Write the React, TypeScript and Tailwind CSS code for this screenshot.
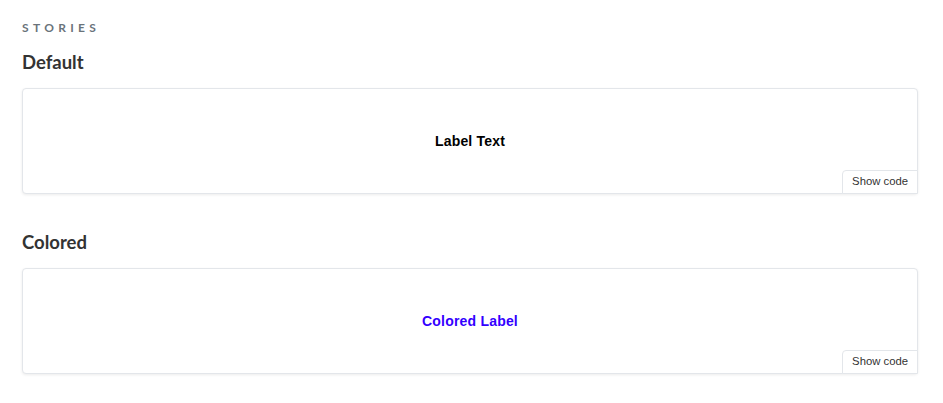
import * as React from "react";

const stories = [
  { name: "Default", label: "Label Text", color: "text-black" },
  { name: "Colored", label: "Colored Label", color: "text-[#3300ff]" },
];

function StoryCard({ label, color }: { label: string; color: string }) {
  return (
    <div className="relative h-[106px] rounded-[4px] border border-[#e3e6ea] bg-white shadow-[0_1px_3px_0_rgba(0,0,0,0.08)] flex items-center justify-center">
      <span className={`font-['Liberation_Sans',Arial,sans-serif] text-[14px] font-bold tracking-[0.2px] ${color}`}>{label}</span>
      <button className="absolute right-[-1px] bottom-[-1px] h-[24px] px-[9px] border border-[#e3e6ea] rounded-tl-[4px] bg-white text-[11.3px] text-[#333] font-['Liberation_Sans',Arial,sans-serif] leading-none">
        Show code
      </button>
    </div>
  );
}

export default function App() {
  return (
    <div className="w-[943px] h-[403px] bg-white pl-[22px] pr-[25px] pt-[21px] font-['Lato','Noto_Sans',sans-serif]">
      <div className="text-[12px] font-bold tracking-[0.36em] text-[#6a737b] leading-[14px] h-[14px]">STORIES</div>
      {stories.map((s, i) => (
        <div key={s.name} className={i === 0 ? "mt-[15px]" : "mt-[36px]"}>
          <h3 className="text-[18.5px] font-bold text-[#333] leading-[24px] h-[24px]">{s.name}</h3>
          <div className="mt-[14px]">
            <StoryCard label={s.label} color={s.color} />
          </div>
        </div>
      ))}
    </div>
  );
}
